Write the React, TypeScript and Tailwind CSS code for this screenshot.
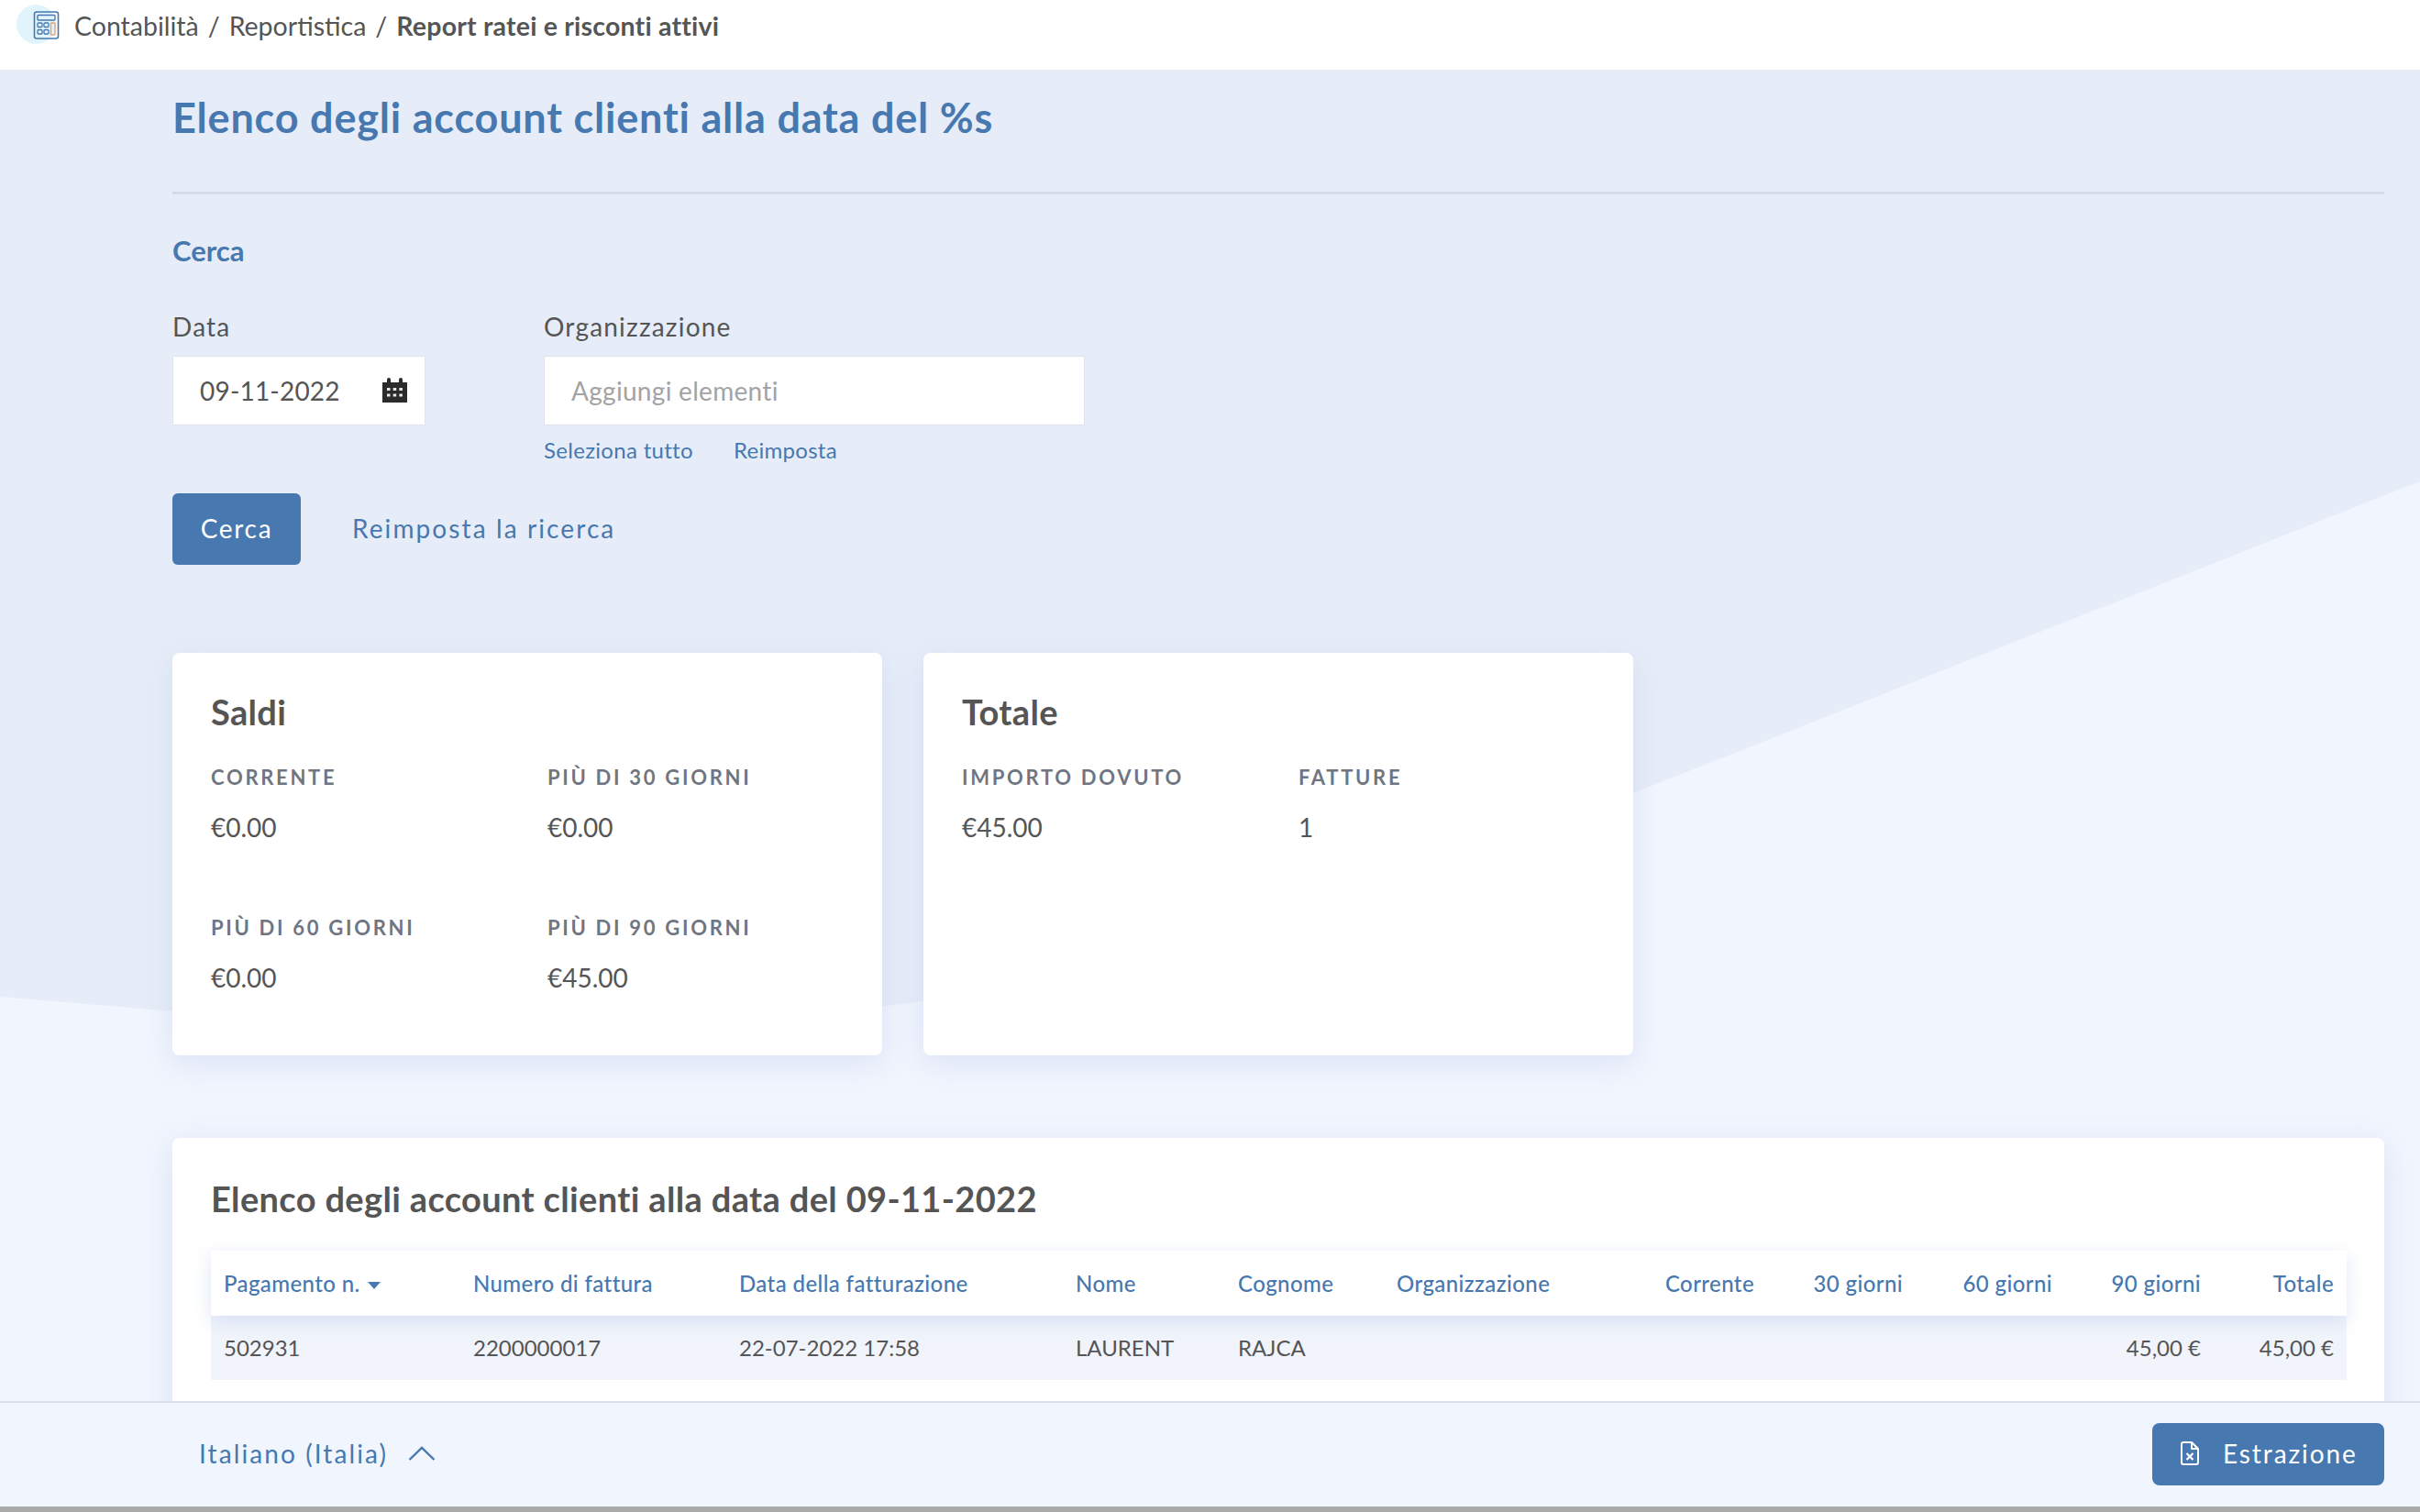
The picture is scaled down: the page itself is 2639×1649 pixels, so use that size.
const headers = [
  { label: "Numero di fattura", right: false },
  { label: "Data della fatturazione", right: false },
  { label: "Nome", right: false },
  { label: "Cognome", right: false },
  { label: "Organizzazione", right: false },
  { label: "Corrente", right: true },
  { label: "30 giorni", right: true },
  { label: "60 giorni", right: true },
  { label: "90 giorni", right: true },
  { label: "Totale", right: true },
];

const row = ["502931", "2200000017", "22-07-2022 17:58", "LAURENT", "RAJCA", "", "", "", "", "45,00 €", "45,00 €"];
const colWidths = [272, 290, 367, 177, 173, 291, 127, 162, 163, 162, 145];

function CalculatorIcon() {
  return (
    <svg viewBox="0 0 28 31" className="absolute left-[36px] top-[12px] h-[31px] w-[29px]" fill="none">
      <rect x="1" y="1" width="26" height="29" rx="2.5" stroke="#4778b0" strokeWidth="1.6" />
      <rect x="4.5" y="4.5" width="19" height="5.5" rx="1" stroke="#4778b0" strokeWidth="1.4" />
      <rect x="4.5" y="13" width="5" height="4.5" rx="1" stroke="#4778b0" strokeWidth="1.3" />
      <rect x="11.5" y="13" width="5" height="4.5" rx="1" stroke="#4778b0" strokeWidth="1.3" />
      <rect x="4.5" y="20.5" width="5" height="4.5" rx="1" stroke="#4778b0" strokeWidth="1.3" />
      <rect x="11.5" y="20.5" width="5" height="4.5" rx="1" stroke="#4778b0" strokeWidth="1.3" />
      <rect x="19" y="13" width="4.5" height="13" rx="1" stroke="#e8a06a" strokeWidth="1.4" />
    </svg>
  );
}

function CalendarIcon() {
  return (
    <svg viewBox="0 0 27 27" className="h-[27px] w-[27px]">
      <path d="M0 5h5V2a2 2 0 0 1 4 0v3h9V2a2 2 0 0 1 4 0v3h5v22H0z" fill="#2b2b2b" />
      <g fill="#e8e8e8">
        <rect x="5" y="11" width="3.5" height="3" />
        <rect x="11.7" y="11" width="3.5" height="3" />
        <rect x="18.4" y="11" width="3.5" height="3" />
        <rect x="5" y="17.5" width="3.5" height="3" />
        <rect x="11.7" y="17.5" width="3.5" height="3" />
        <rect x="18.4" y="17.5" width="3.5" height="3" />
      </g>
    </svg>
  );
}

function FileXIcon() {
  return (
    <svg viewBox="0 0 20 26" className="h-[26px] w-[20px]" fill="none" stroke="#ffffff" strokeWidth="2">
      <path d="M3 1h9l7 7v15a2 2 0 0 1-2 2H3a2 2 0 0 1-2-2V3a2 2 0 0 1 2-2z" strokeLinejoin="round" />
      <path d="M12 1v7h7" strokeLinejoin="round" />
      <path d="M6.5 13l7 7M13.5 13l-7 7" strokeWidth="2.2" />
    </svg>
  );
}

function Stat({ label, value }: { label: string; value: string }) {
  return (
    <div>
      <div className="text-[22px] leading-[30px] font-bold tracking-[2.7px] text-[#6f7682]">{label}</div>
      <div className="mt-[24px] text-[28px] leading-[30px] text-[#555555]">{value}</div>
    </div>
  );
}

function SummaryCard({ title, children }: { title: string; children: React.ReactNode }) {
  return (
    <div className="h-[439px] w-[774px] rounded-lg bg-white pl-[42px] pt-[41px] shadow-[0_8px_32px_rgba(190,205,238,0.45)]">
      <h3 className="text-[38px] leading-[46px] font-bold tracking-[0.35px] text-[#555555]">{title}</h3>
      {children}
    </div>
  );
}

export default function App() {
  return (
    <div className="flex h-[1649px] w-[2639px] flex-col overflow-hidden bg-white font-['Lato','Noto_Sans',sans-serif]">
      <header className="relative flex h-[76px] shrink-0 items-start bg-white pl-[81px] pt-[9px] text-[28.5px] leading-[38px] text-[#555555]">
        <div className="absolute left-[18px] top-[5px] h-[43px] w-[43px] rounded-full bg-[#e1f4fb]" />
        <CalculatorIcon />
        <span>Contabilità</span>
        <span className="mx-[10px]">/</span>
        <span>Reportistica</span>
        <span className="mx-[10px]">/</span>
        <span className="font-bold tracking-[0.2px]">Report ratei e risconti attivi</span>
      </header>

      <main className="relative min-h-0 flex-1 overflow-hidden bg-[#e6edf8] pl-[188px] pr-[39px] pt-[25px]">
        <svg className="absolute inset-0 h-full w-full" viewBox="0 76 2639 1452" preserveAspectRatio="none">
          <path
            d="M0 1087 L188 1103 C500 1125 800 1120 1007 1092 C1300 1020 1500 975 1781 865 L2639 525 V1528 H0 Z"
            fill="#f1f5fd"
          />
        </svg>

        <div className="relative">
          <h1 className="text-[45px] leading-[54px] font-bold tracking-[0.8px] text-[#4778b0]">
            Elenco degli account clienti alla data del %s
          </h1>
          <hr className="mt-[54px] border-0 border-t-[3px] border-[#d3dbe7]" />

          <h2 className="mt-[43px] text-[31px] leading-[36px] font-bold text-[#4778b0]">Cerca</h2>

          <div className="mt-[48px] flex gap-[129px]">
            <div className="w-[276px]">
              <label className="block text-[28px] leading-[34px] tracking-[1.2px] text-[#555555]">Data</label>
              <div className="mt-[15px] flex h-[76px] items-center justify-between border border-[#dfe5ee] bg-white pb-[1px] pl-[29px] pr-[19px]">
                <span className="text-[28px] tracking-[0.2px] text-[#555555]">09-11-2022</span>
                <CalendarIcon />
              </div>
            </div>
            <div className="w-[590px]">
              <label className="block text-[28px] leading-[34px] tracking-[1.2px] text-[#555555]">Organizzazione</label>
              <div className="mt-[15px] flex h-[76px] items-center border border-[#dfe5ee] bg-white pb-[1px] pl-[29px]">
                <span className="text-[28px] tracking-[0.3px] text-[#a3a3a3]">Aggiungi elementi</span>
              </div>
              <div className="mt-[12px] flex gap-[44px] text-[24px] leading-[30px] tracking-[0.3px] text-[#4778b0]">
                <span>Seleziona tutto</span>
                <span>Reimposta</span>
              </div>
            </div>
          </div>

          <div className="mt-[32px] flex items-center gap-[56px]">
            <button className="h-[78px] w-[140px] rounded-md bg-[#4778b0] pb-[2px] text-[28px] tracking-[1.7px] text-white">
              Cerca
            </button>
            <span className="pb-[2px] text-[28px] tracking-[2.1px] text-[#4778b0]">Reimposta la ricerca</span>
          </div>

          <div className="mt-[96px] flex gap-[45px]">
            <SummaryCard title="Saldi">
              <div className="mt-[34px] grid grid-cols-[367px_1fr] gap-y-[80px]">
                <Stat label="CORRENTE" value="€0.00" />
                <Stat label="PIÙ DI 30 GIORNI" value="€0.00" />
                <Stat label="PIÙ DI 60 GIORNI" value="€0.00" />
                <Stat label="PIÙ DI 90 GIORNI" value="€45.00" />
              </div>
            </SummaryCard>
            <SummaryCard title="Totale">
              <div className="mt-[34px] grid grid-cols-[367px_1fr] gap-y-[80px]">
                <Stat label="IMPORTO DOVUTO" value="€45.00" />
                <Stat label="FATTURE" value="1" />
              </div>
            </SummaryCard>
          </div>

          <section className="mt-[90px] rounded-lg bg-white px-[42px] pb-[60px] pt-[43px] shadow-[0_8px_32px_rgba(190,205,238,0.45)]">
            <h3 className="text-[38px] leading-[46px] font-bold tracking-[0.35px] text-[#555555]">
              Elenco degli account clienti alla data del 09-11-2022
            </h3>
            <table className="mt-[34px] w-[2329px] table-fixed border-collapse text-[24px]">
              <colgroup>
                {colWidths.map((w, i) => (
                  <col key={i} style={{ width: w }} />
                ))}
              </colgroup>
              <thead>
                <tr className="relative h-[71px] bg-white text-[#4778b0] shadow-[0_6px_18px_rgba(190,205,238,0.5)]">
                  <th className="pl-[14px] text-left font-medium tracking-[0.4px]">
                    Pagamento n.
                    <span className="ml-[8px] inline-block h-0 w-0 border-x-[7px] border-t-[8px] border-x-transparent border-t-[#4778b0] align-middle" />
                  </th>
                  {headers.map((h) => (
                    <th
                      key={h.label}
                      className={`font-medium tracking-[0.4px] ${h.right ? "pr-[14px] text-right" : "pl-[14px] text-left"}`}
                    >
                      {h.label}
                    </th>
                  ))}
                </tr>
              </thead>
              <tbody>
                <tr className="h-[70px] bg-[#f1f4fb] text-[#555555]">
                  {row.map((cell, i) => (
                    <td key={i} className={i > 5 ? "pr-[14px] text-right" : "pl-[14px] text-left"}>
                      {cell}
                    </td>
                  ))}
                </tr>
              </tbody>
            </table>
          </section>
        </div>
      </main>

      <footer className="flex h-[115px] shrink-0 items-center justify-between border-t-2 border-[#d8dfea] bg-[#f1f5fd] pb-[1px] pl-[217px] pr-[39px]">
        <div className="flex items-center gap-[22px] pb-[2px] text-[#4778b0]">
          <span className="text-[28px] tracking-[2.1px]">Italiano (Italia)</span>
          <svg viewBox="0 0 30 16" className="h-[16px] w-[30px]" fill="none" stroke="#4778b0" strokeWidth="2.4">
            <path d="M1.5 15L15 2l13.5 13" />
          </svg>
        </div>
        <button className="flex h-[68px] w-[253px] items-center gap-[26px] rounded-lg bg-[#4778b0] pb-[2px] pl-[31px] text-[28px] tracking-[1.9px] text-white">
          <FileXIcon />
          Estrazione
        </button>
      </footer>
      <div className="h-[6px] shrink-0 bg-[#a9a9a9]" />
    </div>
  );
}
